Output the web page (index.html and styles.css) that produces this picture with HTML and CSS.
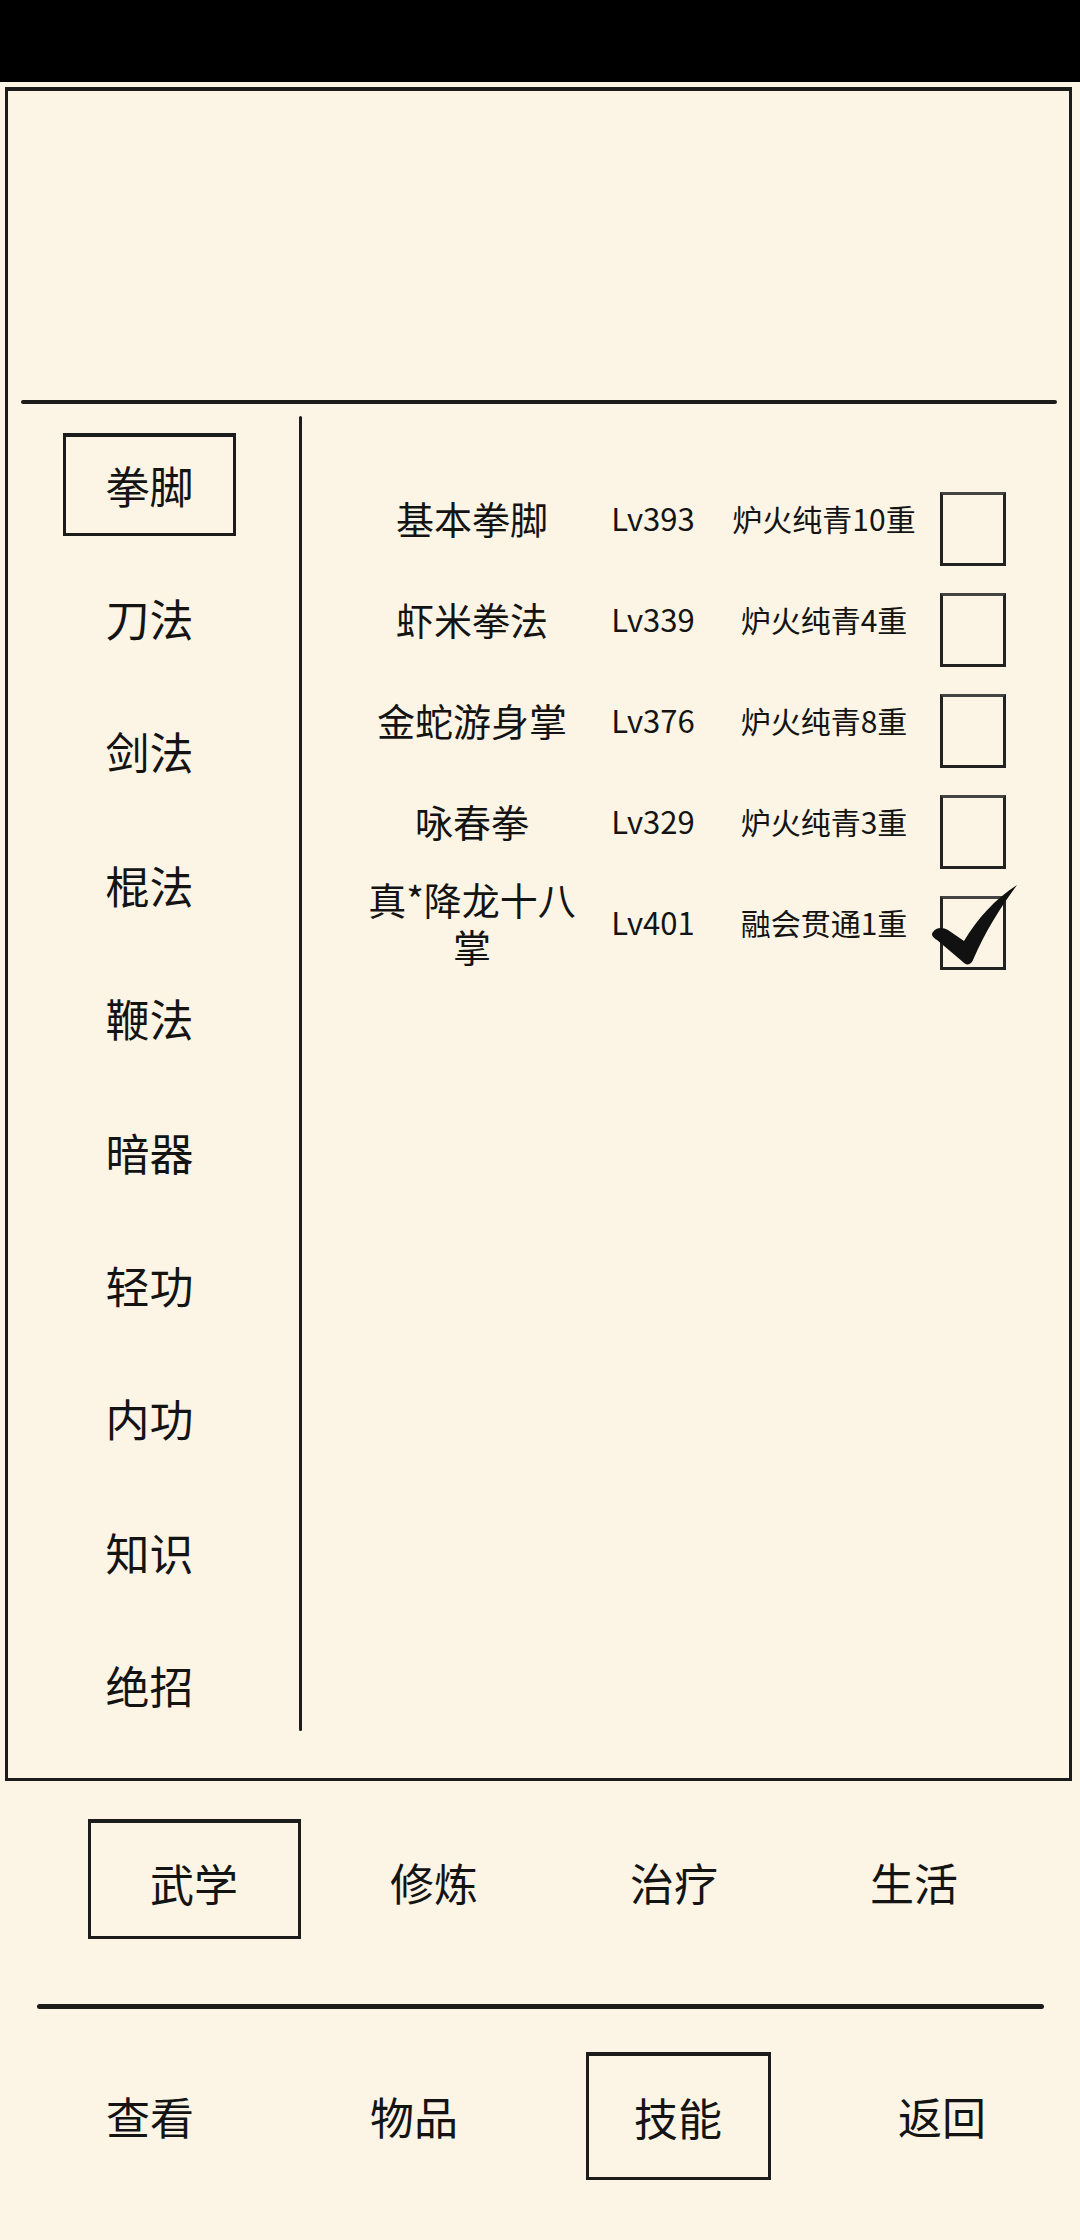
FILE: index.html
```html
<!DOCTYPE html>
<html lang="zh-CN">
<head>
  <meta charset="UTF-8" />
  <meta name="viewport" content="width=device-width, initial-scale=1" />
  <title>技能</title>
  <link rel="stylesheet" href="styles.css">
</head>
<body>
  <div class="status-bar"></div>

  <div class="panel">
    <div class="panel-top"></div>
    <div class="rule"></div>
    <div class="panel-body">
      <ul class="cats">
        <li class="cat active"><span>拳脚</span></li>
        <li class="cat"><span>刀法</span></li>
        <li class="cat"><span>剑法</span></li>
        <li class="cat"><span>棍法</span></li>
        <li class="cat"><span>鞭法</span></li>
        <li class="cat"><span>暗器</span></li>
        <li class="cat"><span>轻功</span></li>
        <li class="cat"><span>内功</span></li>
        <li class="cat"><span>知识</span></li>
        <li class="cat"><span>绝招</span></li>
      </ul>
      <div class="vline"></div>
      <div class="skills">
        <div class="skill-row">
          <div class="skill-name">基本拳脚</div>
          <div class="skill-lv">Lv393</div>
          <div class="skill-stage">炉火纯青10重</div>
          <div class="check"></div>
        </div>
        <div class="skill-row">
          <div class="skill-name">虾米拳法</div>
          <div class="skill-lv">Lv339</div>
          <div class="skill-stage">炉火纯青4重</div>
          <div class="check"></div>
        </div>
        <div class="skill-row">
          <div class="skill-name">金蛇游身掌</div>
          <div class="skill-lv">Lv376</div>
          <div class="skill-stage">炉火纯青8重</div>
          <div class="check"></div>
        </div>
        <div class="skill-row">
          <div class="skill-name">咏春拳</div>
          <div class="skill-lv">Lv329</div>
          <div class="skill-stage">炉火纯青3重</div>
          <div class="check"></div>
        </div>
        <div class="skill-row">
          <div class="skill-name">真*降龙十八掌</div>
          <div class="skill-lv">Lv401</div>
          <div class="skill-stage">融会贯通1重</div>
          <div class="check checked">
            <svg class="tick" width="92" height="86" viewBox="0 0 92 86">
              <path d="M3 50 C6 45 13 45 18 48 L34 59 C48 36 65 17 87 3 C70 26 55 50 43 78 C41 83 36 84 33 80 L7 58 C2 55 1 52 3 50 Z" fill="#111"/>
            </svg>
          </div>
        </div>
      </div>
    </div>
  </div>

  <div class="tabs">
    <div class="tab active"><span>武学</span></div>
    <div class="tab"><span>修炼</span></div>
    <div class="tab"><span>治疗</span></div>
    <div class="tab"><span>生活</span></div>
  </div>

  <div class="divider"></div>

  <nav class="nav">
    <div class="nav-item"><span>查看</span></div>
    <div class="nav-item"><span>物品</span></div>
    <div class="nav-item active"><span>技能</span></div>
    <div class="nav-item"><span>返回</span></div>
  </nav>
</body>
</html>
```

FILE: styles.css
```css
* {
  box-sizing: border-box;
}
html {
  background: #fcf5e5;
}
body {
  margin: 0;
  font-family: "Noto Sans CJK SC", "Noto Sans", sans-serif;
  color: #141414;
  background: #fcf5e5;
  width: 1080px;
  min-height: 2240px;
}
.status-bar {
  height: 82px;
  background: #000;
}

/* main frame */
.panel {
  margin: 5px 8px 0 5px;
  height: 1694px;
  border: 3px solid #1c1c1c;
  border-top-width: 4px;
  display: flex;
  flex-direction: column;
}
.panel-top {
  height: 309px;
}
.rule {
  height: 4px;
  margin: 0 12px 0 13px;
  background: #1c1c1c;
  border-radius: 2px;
}
.panel-body {
  flex: 1;
  display: flex;
}

/* categories */
.cats {
  list-style: none;
  margin: 0;
  padding: 14px 8px 0 0;
  width: 291px;
}
.cat {
  height: 133.4px;
  display: flex;
  align-items: center;
  justify-content: center;
  font-size: 44px;
  line-height: 1;
}
.cat span {
  display: flex;
  align-items: center;
  justify-content: center;
  width: 173px;
  height: 103px;
  border: 3px solid transparent;
}
.cat.active span {
  border-color: #1c1c1c;
  border-top-width: 4px;
}
.vline {
  width: 3px;
  margin: 12px 0 47px;
  background: #1c1c1c;
  border-radius: 2px;
}

/* skill list */
.skills {
  flex: 1;
  padding: 63px 0 0 60px;
}
.skill-row {
  height: 101px;
  display: grid;
  grid-template-columns: 220px 110px 200px 66px;
  column-gap: 16px;
  align-items: center;
}
.skill-name {
  font-size: 38px;
  line-height: 47px;
  text-align: center;
}
.skill-lv {
  font-size: 31px;
  text-align: center;
}
.skill-stage {
  font-size: 30px;
  text-align: center;
}
.check {
  position: relative;
  width: 66px;
  height: 74px;
  margin-top: 22px;
  border: 3px solid #222;
  border-top-color: #444;
}
.tick {
  position: absolute;
  left: -13px;
  top: -17px;
}

/* bottom tabs */
.tabs {
  margin-top: 38px;
  padding-left: 74px;
  display: grid;
  grid-template-columns: repeat(4, 240px);
  height: 120px;
}
.tab,
.nav-item {
  display: flex;
  align-items: center;
  justify-content: center;
  font-size: 44px;
  line-height: 1;
}
.tab span {
  display: flex;
  align-items: center;
  justify-content: center;
  width: 213px;
  height: 120px;
  padding-top: 6px;
  border: 3px solid transparent;
}
.tab.active span {
  border-color: #1c1c1c;
  border-top-width: 4px;
}
.divider {
  height: 5px;
  margin: 65px 36px 0 37px;
  background: #1c1c1c;
  border-radius: 3px;
}
.nav {
  margin-top: 43px;
  padding-left: 18px;
  display: grid;
  grid-template-columns: repeat(4, 264px);
  height: 128px;
}
.nav-item span {
  display: flex;
  align-items: center;
  justify-content: center;
  width: 185px;
  height: 128px;
  border: 3px solid transparent;
}
.nav-item.active span {
  border-color: #1c1c1c;
  border-top-width: 4px;
}
```
